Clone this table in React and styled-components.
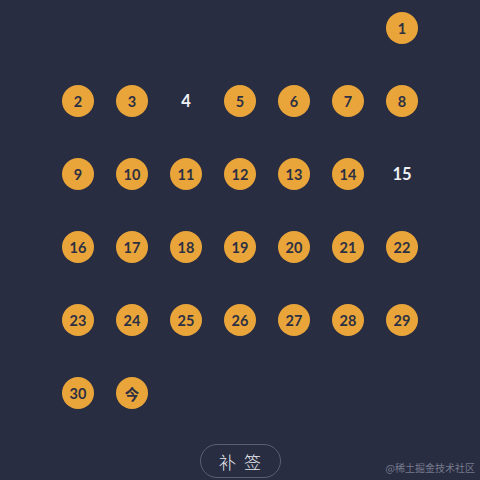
import React from "react";
import styled, { createGlobalStyle } from "styled-components";

const GlobalStyle = createGlobalStyle`
  html, body {
    margin: 0;
    padding: 0;
    background: #282d42;
  }
  body {
    font-family: "Lato", "Noto Sans CJK SC", sans-serif;
  }
`;

const Page = styled.div`
  position: relative;
  width: 480px;
  height: 480px;
  overflow: hidden;
  background: #282d42;
  display: flex;
  flex-direction: column;
  align-items: center;
`;

const Grid = styled.div`
  display: grid;
  grid-template-columns: repeat(7, 54px);
  grid-auto-rows: 32px;
  row-gap: 41px;
  padding-top: 12px;
  justify-items: center;
  align-items: center;
`;

const Day = styled.div`
  width: 32px;
  height: 32px;
  border-radius: 50%;
  display: flex;
  align-items: center;
  justify-content: center;
  font-family: "Lato", "Noto Sans CJK SC", sans-serif;
  font-weight: 700;
  background: ${(p) => (p.$signed ? "#e9a53a" : "transparent")};
  color: ${(p) => (p.$signed ? "#2d3043" : "#eef0f5")};
  font-size: ${(p) => (p.$signed ? "14.5px" : "16.5px")};
`;

const Spacer = styled.div``;

const RetroButton = styled.button`
  margin-top: 35px;
  width: 81px;
  height: 34px;
  border: 1.5px solid #5b5f74;
  border-radius: 17px;
  background: transparent;
  color: #e8eaf0;
  font-family: "Noto Sans CJK SC", sans-serif;
  font-weight: 300;
  font-size: 17px;
  letter-spacing: 8px;
  padding: 0 0 0 8px;
  display: flex;
  align-items: center;
  justify-content: center;
`;

const Watermark = styled.div`
  position: absolute;
  right: 5px;
  bottom: 5px;
  font-family: "Noto Sans CJK SC", sans-serif;
  font-size: 10px;
  color: #767a8c;
`;

const missed = [4, 15];

export default function App() {
  const days = Array.from({ length: 31 }, (_, i) => i + 1);
  return (
    <>
      <GlobalStyle />
      <Page>
        <Grid>
          {Array.from({ length: 6 }).map((_, i) => (
            <Spacer key={"s" + i} />
          ))}
          {days.map((d) => (
            <Day key={d} $signed={!missed.includes(d)}>
              {d === 31 ? "今" : d}
            </Day>
          ))}
        </Grid>
        <RetroButton>补签</RetroButton>
        <Watermark>@稀土掘金技术社区</Watermark>
      </Page>
    </>
  );
}
